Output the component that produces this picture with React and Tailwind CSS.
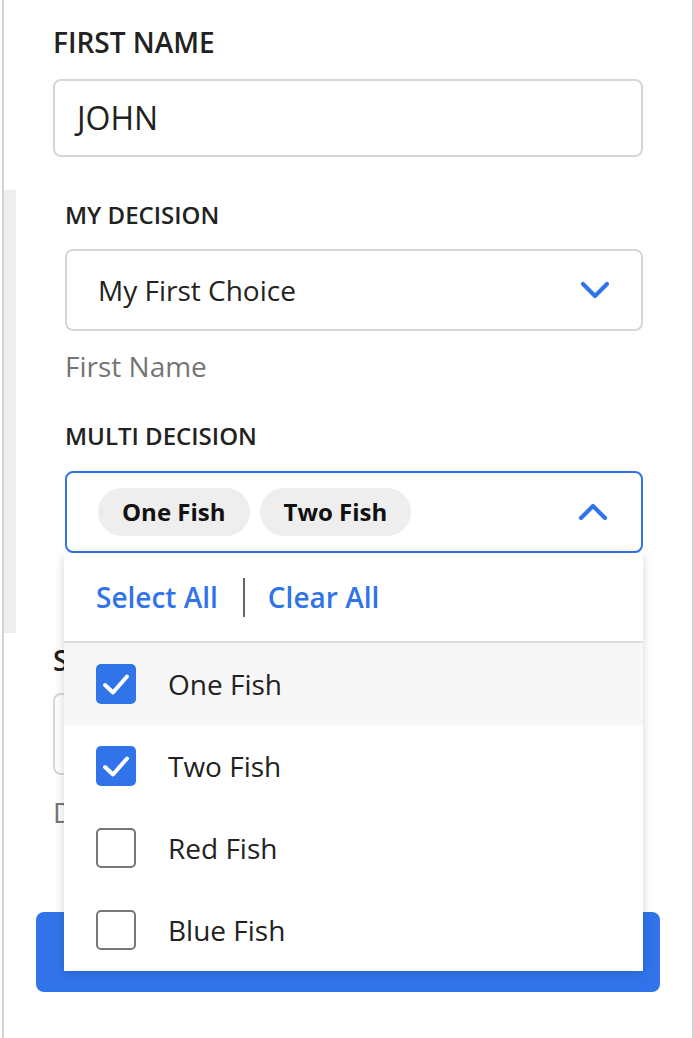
import React from 'react';

const options = [
  { label: 'One Fish', checked: true, hover: true },
  { label: 'Two Fish', checked: true },
  { label: 'Red Fish', checked: false },
  { label: 'Blue Fish', checked: false },
];

const Chevron = ({ up }) => (
  <svg width="32" height="20" viewBox="0 0 32 20" fill="none">
    <path
      d={up ? 'M4 16 L16 4 L28 16' : 'M4 4 L16 16 L28 4'}
      stroke="#3174ea"
      strokeWidth="4.2"
      strokeLinecap="round"
      strokeLinejoin="round"
    />
  </svg>
);

const Checkbox = ({ checked }) => {
  if (checked) {
    return (
      <div className="w-[40px] h-[40px] rounded-[5px] bg-[#3174ea] flex items-center justify-center shrink-0">
        <svg width="40" height="40" viewBox="0 0 40 40" fill="none">
          <path
            d="M9 21 L17 28.5 L31 12.5"
            stroke="white"
            strokeWidth="4"
            strokeLinecap="round"
            strokeLinejoin="round"
          />
        </svg>
      </div>
    );
  }
  return <div className="w-[40px] h-[40px] rounded-[5px] border-2 border-[#777777] bg-white shrink-0" />;
};

const App = () => {
  return (
    <div
      className="min-h-[1038px] bg-white text-[#222222]"
      style={{ fontFamily: '"Open Sans", "Noto Sans", sans-serif' }}
    >
      <div className="ml-[2px] w-[692px] min-h-[1038px] border-x-2 border-[#d4d4d4]">
        {/* first name */}
        <div className="px-[49px] pt-[24px]">
          <div className="text-[28px] leading-[36px] font-semibold">FIRST NAME</div>
          <div className="mt-[19px] h-[78px] border-2 border-[#d6d6d6] rounded-[8px] flex items-center px-[22px] text-[32px]">
            JOHN
          </div>
        </div>

        {/* nested decisions */}
        <div className="mt-[33px] border-l-[12px] border-[#eeeeee] pl-[49px] pr-[49px] pt-[9px] pb-[80px]">
          <div className="text-[24px] leading-[32px] font-semibold">MY DECISION</div>
          <div className="mt-[18px] h-[82px] border-2 border-[#d6d6d6] rounded-[8px] flex items-center justify-between pl-[31px] pr-[30px]">
            <span className="text-[28px]">My First Choice</span>
            <Chevron />
          </div>
          <div className="mt-[16px] text-[28px] leading-[38px] text-[#757575]">First Name</div>

          <div className="mt-[35px] text-[24px] leading-[32px] font-semibold">MULTI DECISION</div>
          <div className="relative mt-[19px]">
            <div className="h-[82px] border-2 border-[#3174ea] rounded-[8px] flex items-center justify-between pl-[31px] pr-[32px]">
              <div className="flex gap-[10px]">
                {['One Fish', 'Two Fish'].map((chip) => (
                  <span
                    key={chip}
                    className="h-[48px] px-[24px] rounded-full bg-[#eeeeee] flex items-center text-[24px] font-bold text-[#111111]"
                  >
                    {chip}
                  </span>
                ))}
              </div>
              <Chevron up />
            </div>

            <div className="absolute z-10 top-full -left-[1px] right-0 bg-white shadow-[0_2px_10px_rgba(0,0,0,0.16)]">
              <div className="h-[90px] flex items-center pl-[32px] border-b-2 border-[#dcdcdc] text-[28px] font-semibold text-[#3174ea]">
                <span>Select All</span>
                <span className="ml-[25px] mr-[23px] w-[2px] h-[39px] bg-[#666666]" />
                <span>Clear All</span>
              </div>
              {options.map((opt) => (
                <div
                  key={opt.label}
                  className={`h-[82px] flex items-center pl-[32px] gap-[32px] ${opt.hover ? 'bg-[#f7f7f7]' : 'bg-white'}`}
                >
                  <Checkbox checked={opt.checked} />
                  <span className="text-[28px]">{opt.label}</span>
                </div>
              ))}
            </div>
          </div>
        </div>

        {/* fields under the open menu */}
        <div className="px-[49px] pt-[9px]">
          <div className="text-[28px] leading-[36px] font-semibold">STATUS</div>
          <div className="mt-[15px] h-[82px] border-2 border-[#d6d6d6] rounded-[8px]" />
          <div className="mt-[18px] text-[28px] leading-[38px] text-[#757575]">Description</div>
        </div>
        <div className="mx-[32px] mt-[81px] h-[80px] rounded-[8px] bg-[#3174ea]" />
      </div>
    </div>
  );
};

export default App;
